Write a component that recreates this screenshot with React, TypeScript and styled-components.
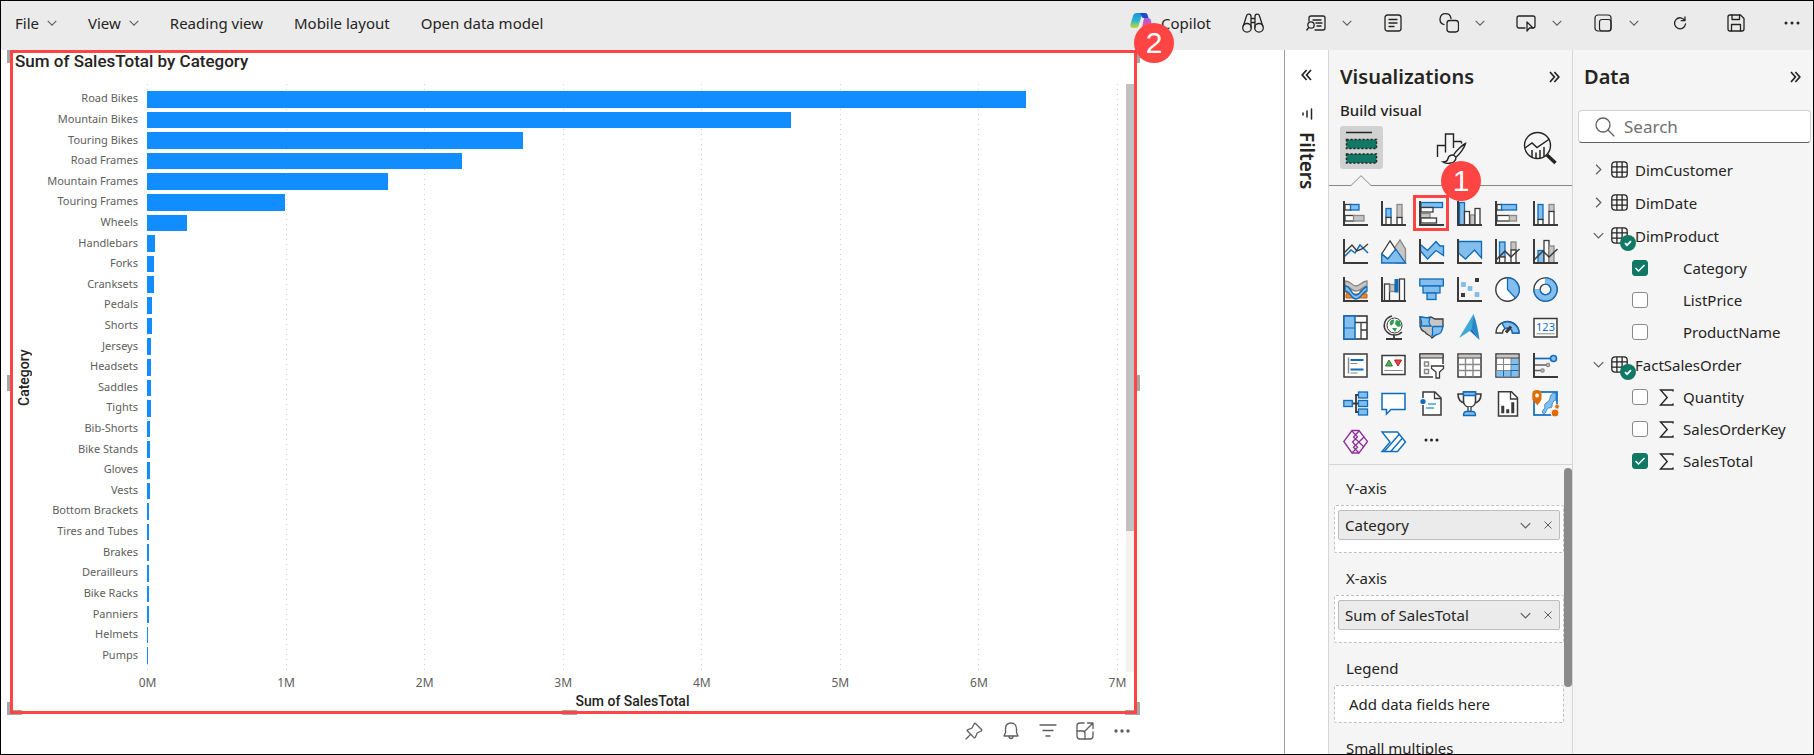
import React from "react";
import styled, { createGlobalStyle } from "styled-components";

const ink = "#252423";
const dark = "#3b3a39";
const blue = "#118dff";
const red = "#ff4444";
const green = "#117865";
const iconBlue = "#83beec";
const iconEdge = "#0f6cbd";
const iconGray = "#c8c6c4";

const GlobalStyle = createGlobalStyle`
  *, *::before, *::after { box-sizing: border-box; }
  body {
    margin: 0;
    font-family: "Noto Sans", "Open Sans", sans-serif;
    font-size: 15px;
    line-height: 20px;
    color: ${ink};
    background: #fff;
  }
  button {
    font: inherit;
    color: inherit;
    background: none;
    border: 0;
    padding: 0;
    cursor: pointer;
  }
  svg { display: block; flex: none; }
  ul { list-style: none; margin: 0; padding: 0; }
  h1, h2, h3 { margin: 0; }
`;

const Shell = styled.div`
  display: flex;
  flex-direction: column;
  height: 100vh;
  border: 1px solid #000;
  overflow: hidden;
`;

/* ---------- top bar ---------- */

const TopBar = styled.header`
  display: flex;
  justify-content: space-between;
  align-items: center;
  height: 49px;
  flex: none;
  padding: 0 11px 6px 14px;
  background: #ebebeb;
`;

const MenuGroup = styled.nav`
  display: flex;
  align-items: center;
  gap: 31px;
`;

const MenuButton = styled.button`
  display: flex;
  align-items: center;
  gap: 8px;
  white-space: nowrap;
  font-size: 15px;
`;

const ActionGroup = styled.div`
  display: flex;
  align-items: center;
  gap: 31px;
`;

const ActionButton = styled.button<{ $after?: number }>`
  display: flex;
  align-items: center;
  gap: 16px;
  padding-right: ${(p) => p.$after ?? 0}px;
`;

const CopilotButton = styled.button`
  display: flex;
  align-items: center;
  gap: 8px;
`;

/* ---------- layout ---------- */

const Workspace = styled.div`
  display: flex;
  flex: 1;
  min-height: 0;
`;

const Canvas = styled.main`
  display: flex;
  flex-direction: column;
  flex: 1;
  min-width: 0;
  padding: 0 147px 0 9px;
`;

/* ---------- bar chart visual ---------- */

const Visual = styled.section`
  position: relative;
  display: flex;
  flex-direction: column;
  flex: 1;
  min-height: 0;
  border: 3px solid ${red};
  font-family: Roboto, "Noto Sans", sans-serif;
`;

const Handle = styled.span<{ $v: "top" | "mid" | "bottom"; $h: "left" | "center" | "right" }>`
  position: absolute;
  z-index: -1;
  border: 0 solid #a6a6a6;
  width: ${(p) => (p.$h === "center" || p.$v === "bottom" ? 15 : 5)}px;
  height: ${(p) => (p.$h === "center" ? 5 : p.$v === "mid" ? 16 : 13)}px;
  ${(p) =>
    p.$h === "left"
      ? "left: -6px; border-left-width: 5px;"
      : p.$h === "right"
        ? "right: -6px; border-right-width: 5px;"
        : "left: 49%;"}
  ${(p) =>
    p.$v === "top"
      ? "top: -3px;"
      : p.$v === "bottom"
        ? "bottom: -4px; border-bottom-width: 5px;"
        : "top: 49%;"}
`;

const Callout = styled.span<{ $top: number; $right: number }>`
  position: absolute;
  top: ${(p) => p.$top}px;
  right: ${(p) => p.$right}px;
  z-index: 3;
  display: flex;
  align-items: center;
  justify-content: center;
  width: 40px;
  height: 40px;
  border-radius: 50%;
  background: ${red};
  color: #fff;
  font-family: "Liberation Sans", sans-serif;
  font-size: 30px;
`;

const VisualTitle = styled.h1`
  height: 31px;
  flex: none;
  padding-left: 2px;
  font-size: 17px;
  font-weight: 500;
  line-height: 16px;
`;

const Plot = styled.div`
  display: flex;
  flex: 1;
  min-height: 0;
`;

const YTitle = styled.div`
  display: flex;
  align-items: center;
  justify-content: center;
  width: 22px;
  writing-mode: vertical-rl;
  transform: rotate(180deg);
  font-size: 14px;
  font-weight: 500;
`;

const Labels = styled.ul`
  display: flex;
  flex-direction: column;
  width: 103px;
  padding: 4px 0 7px;
  text-align: right;
  font-family: "Noto Sans", sans-serif;
  font-size: 11px;
  color: #605e5c;
`;

const Label = styled.li`
  display: flex;
  flex: 1;
  align-items: center;
  justify-content: flex-end;
  white-space: nowrap;
  min-height: 0;
`;

const PlotArea = styled.div`
  display: grid;
  flex: 1;
  margin: 0 8px 0 9px;
  min-width: 0;

  > * { grid-area: 1 / 1; }
`;

const Grid = styled.div`
  display: flex;
  justify-content: space-between;
`;

const GridLine = styled.span`
  width: 1px;
  background: repeating-linear-gradient(#d2d0ce 0 1px, transparent 1px 5px);
`;

const Bars = styled.ul`
  display: flex;
  flex-direction: column;
  && { padding: 5px 0 6px; }
`;

const BarRow = styled.li`
  display: flex;
  flex: 1;
  min-height: 0;
  padding: 2px 0;
`;

const Bar = styled.span`
  background: ${blue};
`;

const ScrollTrack = styled.div`
  width: 8px;
  background: #f3f2f1;
`;

const ScrollThumb = styled.div`
  height: 76%;
  background: #c1c1c1;
`;

const Ticks = styled.div`
  display: flex;
  justify-content: space-between;
  height: 22px;
  flex: none;
  margin: 0 16px 0 134px;
  font-family: "Noto Sans", sans-serif;
  font-size: 12px;
  line-height: 22px;
  color: #605e5c;
`;

const Tick = styled.span`
  display: flex;
  justify-content: center;
  width: 1px;
`;

const XTitle = styled.div`
  height: 17px;
  flex: none;
  margin: 0 16px 0 134px;
  text-align: center;
  font-size: 14px;
  font-weight: 500;
  line-height: 14px;
`;

const VisualActions = styled.div`
  display: flex;
  justify-content: flex-end;
  align-items: center;
  gap: 17px;
  height: 40px;
  flex: none;
  padding: 0 5px 6px 0;
  color: #605e5c;
`;

/* ---------- filters strip ---------- */

const FiltersStrip = styled.aside`
  display: flex;
  flex-direction: column;
  align-items: center;
  gap: 27px;
  width: 44px;
  flex: none;
  padding: 19px 0 0;
  border-left: 1px solid #a19f9d;
`;

const FiltersTab = styled.button`
  display: flex;
  align-items: center;
  gap: 12px;
  writing-mode: vertical-rl;
  font-size: 19px;
  font-weight: 600;
`;

/* ---------- panes ---------- */

const Pane = styled.aside<{ $width: number }>`
  position: relative;
  display: flex;
  flex-direction: column;
  width: ${(p) => p.$width}px;
  flex: none;
  background: #f5f5f5;
  border-left: 1px solid #d6d6d6;
`;

const PaneHeader = styled.div`
  display: flex;
  align-items: center;
  justify-content: space-between;
  height: 52px;
  flex: none;
  padding: 1px 12px 0 11px;
`;

const PaneTitle = styled.h2`
  font-size: 20px;
  font-weight: 600;
  line-height: 28px;
`;

const SubTitle = styled.h3`
  height: 24px;
  flex: none;
  padding-left: 11px;
  font-size: 15px;
  font-weight: 500;
  line-height: 16px;
`;

const Modes = styled.div`
  display: flex;
  justify-content: space-between;
  height: 60px;
  flex: none;
  padding: 0 11px;
`;

const ModeButton = styled.button<{ $active?: boolean }>`
  display: flex;
  align-items: center;
  justify-content: center;
  width: 43px;
  height: 43px;
  border-radius: 3px;
  background: ${(p) => (p.$active ? "#d1d1d1" : "transparent")};
`;

const Notch = styled.div`
  display: flex;
  height: 11px;
  flex: none;
  margin-top: -11px;
  color: #8a8886;

  &::before { content: ""; width: 22px; border-bottom: 1px solid; }
  &::after { content: ""; flex: 1; border-bottom: 1px solid; }
`;

const Gallery = styled.div`
  display: grid;
  grid-template-columns: repeat(6, 38px);
  grid-auto-rows: 38px;
  flex: none;
  padding: 8px 0 4px 7px;
  border-bottom: 1px solid #d6d6d6;
`;

const GalleryButton = styled.button<{ $marked?: boolean }>`
  display: flex;
  align-items: center;
  justify-content: center;
  margin: 1px;
  border: 3px solid ${(p) => (p.$marked ? red : "transparent")};
`;

const Wells = styled.div`
  display: flex;
  flex: 1;
  min-height: 0;
  overflow: hidden;
`;

const WellList = styled.div`
  flex: 1;
  padding: 0 0 0 5px;
`;

const WellTitle = styled.h3`
  height: 40px;
  padding: 13px 0 0 12px;
  font-size: 15px;
  font-weight: 400;
  line-height: 20px;
`;

const Well = styled.div<{ $empty?: boolean }>`
  height: ${(p) => (p.$empty ? 38 : 48)}px;
  margin-bottom: 2px;
  padding: ${(p) => (p.$empty ? "8px 14px" : "4px 3px")};
  border: 1px dashed #c0c0c0;
  border-radius: 2px;
  background: #fff;
`;

const Pill = styled.div`
  display: flex;
  align-items: center;
  gap: 13px;
  height: 30px;
  padding: 0 7px 0 6px;
  border: 1px solid #bdbdbd;
  border-radius: 2px;
  background: #ebebeb;
`;

const PillText = styled.span`
  flex: 1;
`;

const WellScroll = styled.div`
  width: 8px;
  height: 219px;
  margin-top: 3px;
  border-radius: 4px;
  background: #8a8a8a;
`;

/* ---------- data pane ---------- */

const SearchBox = styled.label`
  display: flex;
  align-items: center;
  gap: 7px;
  height: 33px;
  flex: none;
  margin: 8px 2px 10px 5px;
  padding-left: 16px;
  border: 1px solid #d1d1d1;
  border-bottom-color: #616161;
  border-radius: 4px;
  background: #fff;
  color: #616161;
`;

const SearchInput = styled.input`
  flex: 1;
  min-width: 0;
  border: 0;
  outline: 0;
  background: none;
  font: inherit;
  font-size: 17px;

  &::placeholder { color: #707070; opacity: 1; }
`;

const TableRow = styled.button`
  display: flex;
  align-items: center;
  gap: 7px;
  width: 100%;
  height: 33px;
  padding-left: 20px;
`;

const TableIconBox = styled.span`
  position: relative;
`;

const TableBadge = styled.span`
  position: absolute;
  left: 9px;
  top: 8px;
`;

const FieldRow = styled.label`
  display: flex;
  align-items: center;
  height: 32px;
  padding-left: 59px;
`;

const SigmaSlot = styled.span`
  width: 35px;
  padding-left: 11px;
`;

const Check = styled.input`
  appearance: none;
  width: 16px;
  height: 16px;
  margin: 0;
  border: 1px solid #8a8886;
  border-radius: 3px;
  background: #fff;

  &:checked {
    border-color: ${green};
    background: ${green};
  }
`;

const CheckBoxWrap = styled.span`
  display: grid;

  > * { grid-area: 1 / 1; }
  > svg { pointer-events: none; }
`;

/* ---------- small icons ---------- */

const Chevron = ({ dir = "down", size = 10 }: { dir?: "down" | "right"; size?: number }) => (
  <svg width={size} height={size} viewBox="0 0 10 10" fill="none" stroke="#605e5c" strokeWidth="1.1">
    <path d={dir === "down" ? "M.7 2.8 5 7.1l4.3-4.3" : "M2.8.7 7.1 5 2.8 9.3"} />
  </svg>
);

const DoubleChevron = ({ left }: { left?: boolean }) => (
  <svg width="11" height="12" viewBox="0 0 11 12" fill="none" stroke={ink} strokeWidth="1.7">
    <path d={left ? "M5.6 1 1.2 6l4.4 5M10 1 5.6 6l4.4 5" : "M1 1l4.4 5L1 11M5.4 1l4.4 5-4.4 5"} />
  </svg>
);

const Line = ({ w = 20, h = 20, sw = 1.3, children }: { w?: number; h?: number; sw?: number; children: React.ReactNode }) => (
  <svg width={w} height={h} viewBox={`0 0 ${w} ${h}`} fill="none" stroke="currentColor" strokeWidth={sw} strokeLinejoin="round" strokeLinecap="round">
    {children}
  </svg>
);

const CopilotIcon = () => (
  <svg width="23" height="22" viewBox="0 0 23 22">
    <defs>
      <linearGradient id="cpA" x1="0" y1="0" x2="0" y2="1">
        <stop offset="0" stopColor="#1b8fe8" />
        <stop offset=".5" stopColor="#2bb5c9" />
        <stop offset="1" stopColor="#c9d83a" />
      </linearGradient>
      <linearGradient id="cpB" x1="0" y1="0" x2="0" y2="1">
        <stop offset="0" stopColor="#a45be8" />
        <stop offset=".5" stopColor="#e2559b" />
        <stop offset="1" stopColor="#ff8a4c" />
      </linearGradient>
    </defs>
    <path d="M14 6h4c1.600 0 2.500 1 3 2.500.8 2.500.4 4-.2 6L19.500 18c-.7 2-1.700 3-4 3H8c2 0 3-1 3.500-3z" fill="url(#cpB)" />
    <path d="M7 1h8c-2 0-3 1-3.500 3L8.500 14c-.5 1.500-1.500 2-3 2H3c-2.500 0-3-2-2.300-4.500L3 4c.6-2 1.800-3 4-3z" fill="url(#cpA)" />
    <path d="M10 1h5c1.600 0 2.300.8 2.700 2.200L18.500 6H14c-1.500 0-2.500-1-2.500-2z" fill="#1c4bc9" />
  </svg>
);

const Dots = ({ size = 20, r = 1.5, gap = 6 }: { size?: number; r?: number; gap?: number }) => (
  <svg width={size} height={size} viewBox={`0 0 ${size} ${size}`} fill="currentColor">
    {[-1, 0, 1].map((n) => (
      <circle key={n} cx={size / 2 + n * gap} cy={size / 2} r={r} />
    ))}
  </svg>
);

const Sigma = () => (
  <svg width="15" height="17" viewBox="0 0 15 17" fill="none" stroke={ink} strokeWidth="1.4">
    <path d="M14 2.500V1H1.500l6.700 7.500L1.500 16H14v-1.500" />
  </svg>
);

const TableIcon = () => (
  <svg width="17" height="17" viewBox="0 0 17 17" fill="none" stroke={ink} strokeWidth="1.3">
    <rect x=".8" y=".8" width="15.400" height="15.400" rx="3.200" />
    <path d="M5.900 1v15M11.100 1v15M1 5.900h15M1 11.100h15" />
  </svg>
);

const BadgeIcon = () => (
  <svg width="16" height="16" viewBox="0 0 16 16" fill="none">
    <circle cx="8" cy="8" r="8" fill={green} />
    <path d="m5 8.200 2 2 4-4" stroke="#fff" strokeWidth="1.700" />
  </svg>
);

/* ---------- gallery icons, drawn on a 25px square ---------- */

const Axes = () => <path d="M1 0v24h24" stroke={dark} strokeWidth="2" fill="none" />;
const B = { fill: iconBlue, stroke: iconEdge, strokeWidth: 1.3 };
const G = { fill: iconGray, stroke: "#8a8886", strokeWidth: 1.3 };
const W = { fill: "#fff", stroke: dark, strokeWidth: 1.3 };

const galleryIcons: { name: string; art: React.ReactNode }[] = [
  { name: "Stacked bar chart", art: <><rect x="2" y="3.500" width="6" height="5.500" {...W} /><rect x="7.500" y="3.500" width="8.500" height="5.500" {...B} /><rect x="2" y="14.500" width="9" height="5.500" {...W} /><rect x="10.500" y="14.500" width="10.500" height="5.500" {...G} /><Axes /></> },
  { name: "Stacked column chart", art: <><rect x="5" y="7.500" width="5" height="9" {...B} /><rect x="5" y="16.500" width="5" height="7.500" {...W} /><rect x="16" y="3.500" width="5" height="13" {...G} /><rect x="16" y="16.500" width="5" height="7.500" {...W} /><Axes /></> },
  { name: "Clustered bar chart", art: <><rect x="2" y="1.500" width="21.500" height="5" {...B} /><rect x="2" y="6.500" width="12" height="4.500" {...W} /><rect x="2" y="12.500" width="9" height="4.500" {...G} /><rect x="2" y="17" width="15.500" height="5" {...W} /><Axes /></> },
  { name: "Clustered column chart", art: <><rect x="2.500" y="1.500" width="5" height="22.500" {...B} /><rect x="7.500" y="10.500" width="5" height="13.500" {...W} /><rect x="13.500" y="14" width="4.500" height="10" {...G} /><rect x="18" y="7.500" width="5" height="16.500" {...W} /><Axes /></> },
  { name: "100% stacked bar chart", art: <><rect x="2" y="3.500" width="5" height="5.500" {...W} /><rect x="6.500" y="3.500" width="15" height="5.500" {...B} /><rect x="2" y="14.500" width="12.500" height="5.500" {...W} /><rect x="14.500" y="14.500" width="7" height="5.500" {...G} /><Axes /></> },
  { name: "100% stacked column chart", art: <><rect x="5" y="3.500" width="5" height="15" {...B} /><rect x="5" y="18.500" width="5" height="5.500" {...W} /><rect x="16" y="3.500" width="5" height="7" {...G} /><rect x="16" y="10.500" width="5" height="13.500" {...W} /><Axes /></> },
  { name: "Line chart", art: <><path d="m1 18 7-7 4 3 5-8 8 8" stroke={iconEdge} strokeWidth="1.500" /><path d="m1 14 8-8 5 6 5-2 6-5" stroke={dark} strokeWidth="1.400" /><Axes /></> },
  { name: "Area chart", art: <><path d="m10 14 9-13 5.500 9v14H15z" {...G} /><path d="M.7 15 9 2l6 9-8 9z" {...W} /><path d="M.7 24V15l6 5 8-10 9.800 14z" {...B} /></> },
  { name: "Stacked area chart", art: <><path d="m1.500 5.500 7 6 8.500-9 4 4.500h3.500v9.500L17 11.500 8.500 20l-7-8z" {...B} /><Axes /></> },
  { name: "100% stacked area chart", art: <><path d="M1.500 2.500h23V19l-7-8-9 9-7-6z" {...B} /><Axes /></> },
  { name: "Line and stacked column chart", art: <><rect x="4.500" y="3" width="5.500" height="15" {...B} /><rect x="4.500" y="18" width="5.500" height="6" {...W} /><rect x="16" y="3" width="5" height="8" {...G} /><rect x="16" y="11" width="5" height="13" {...W} /><path d="m1 21 9-9 6 6 8.500-8" stroke={dark} strokeWidth="1.500" /><Axes /></> },
  { name: "Line and clustered column chart", art: <><rect x="5" y="11.500" width="6" height="12.500" {...B} /><rect x="11" y="1.500" width="5" height="22.500" {...W} /><rect x="16" y="7" width="5" height="17" {...G} /><path d="m1 21 9-9 6 6 8.500-8" stroke={dark} strokeWidth="1.500" /><Axes /></> },
  { name: "Ribbon chart", art: <><path d="M3 12h5v4H3zM3 17h21v4H3zM17 12h6v4h-6z" fill="#f08a24" stroke="#c55a11" /><path d="M2 4c6 0 7 5 11 5s6-5 11-5v5c-4 0-6 5-11 5S8 9 2 9z" {...G} /><path d="M2 9c6 0 6 9 11 9s6-8 11-8v4c-4 0-6 8-11 8S7 14 2 14z" {...B} /><Axes /></> },
  { name: "Waterfall chart", art: <><rect x="3.500" y="7" width="5" height="17" {...W} /><rect x="9" y="7.500" width="5" height="7" {...G} /><rect x="14" y="2.500" width="3" height="12.500" fill={iconEdge} stroke={iconEdge} /><rect x="18.500" y="2" width="5" height="22" {...W} /><Axes /></> },
  { name: "Funnel chart", art: <><rect x=".8" y="2" width="23.500" height="7" {...B} /><rect x="4" y="9" width="17" height="7" {...B} /><rect x="8" y="16" width="9" height="6.500" {...B} /></> },
  { name: "Scatter chart", art: <><path d="M18 1h4v4h-4zM4 16h4v4H4z" fill={dark} /><path d="M4.500 5.500h4v4h-4zM11 9.500h4v4h-4zM18 15.500h4v4h-4z" fill={iconBlue} stroke="#6aaee0" strokeWidth=".6" /><Axes /></> },
  { name: "Pie chart", art: <><circle cx="12.500" cy="12.500" r="11.700" {...W} strokeWidth="1.400" /><path d="M12.500.8a11.700 11.700 0 0 1 8 20.200l-8-8.500z" {...B} /></> },
  { name: "Donut chart", art: <><circle cx="12.500" cy="12.500" r="8.500" fill="none" stroke={dark} strokeWidth="7.500" /><circle cx="12.500" cy="12.500" r="8.500" fill="none" stroke="#fff" strokeWidth="4.800" /><path d="M12.500 4a8.500 8.500 0 1 1-8.500 8.500" fill="none" stroke={iconEdge} strokeWidth="7.500" /><path d="M12.500 4a8.500 8.500 0 1 1-8.500 8.500" fill="none" stroke={iconBlue} strokeWidth="4.800" /></> },
  { name: "Treemap", art: <><rect x="1" y="1" width="23" height="23" {...W} strokeWidth="1.600" /><rect x="1" y="1" width="11" height="23" {...B} strokeWidth="1.500" /><path d="M1 13h11" stroke={iconEdge} /><path d="M12 7.500h12M18 7.500V24M18 15h6" stroke={dark} strokeWidth="1.300" /></> },
  { name: "Map", art: <><circle cx="13.500" cy="10.500" r="7.500" fill="#fff" stroke={dark} /><path d="M9 7c2-3 4-3 4-1s-1 3-2 4-3 0-2-3zM15 5l4 1 1 5-3 1-3-3zM11 13l5 0-2 4z" fill="#2e9e4f" /><path d="M11 1C3 3 1 12 6 17c4 4 11 4 15 0" stroke={dark} strokeWidth="1.500" /><path d="M13 20v3.500M5 24h16" stroke={dark} strokeWidth="1.800" /></> },
  { name: "Filled map", art: <><path d="M1 2l6 1 5-1 4 2h8v7c-2 3-2 7-5 8-3 0-4 3-6 4-1-3-6-3-7-6-3-1-5-4-5-8z" {...G} stroke={dark} /><path d="M1 2l10 1c-1 3-2 5 1 8H1.500C4 8 2 5 1 2z" {...B} /><path d="M24 11.500c-1 4-2 8-6 8-2 0-3 3-5 1 2-3-1-6 1-9z" {...B} /></> },
  { name: "Azure map", art: <><path d="M16.500-1 2 23l14-9z" fill="#3fa9d6" /><path d="M16.500-1 15 14l7.500 11c-1-8-3-18-6-26z" fill="#2788c4" /><path d="m13 16 2-2 7.500 11z" fill="#1769c9" /></> },
  { name: "Gauge", art: <><path d="M1 18a11.500 11.500 0 0 1 23 0h-6.500a5 5 0 0 0-10 0z" {...W} strokeWidth="1.400" /><path d="M7 8.300A11.500 11.500 0 0 1 24 18h-6.500A5 5 0 0 0 10 13.600z" {...B} strokeWidth="1.400" /><path d="m11 17.500 5-6" stroke={dark} strokeWidth="3" /></> },
  { name: "Card", art: <><rect x="1" y="3.500" width="23" height="18.500" fill="#fff" stroke={dark} strokeWidth="1.500" /><text x="12.500" y="15.800" textAnchor="middle" fontSize="11" fontFamily="Noto Sans" fill={iconEdge} stroke="none">123</text><path d="M3.500 18.800h18" stroke="#8a8886" /></> },
  { name: "Multi-row card", art: <><rect x="1" y="1" width="23" height="23" fill="#fff" stroke={dark} strokeWidth="1.500" /><path d="M5.500 4.500v16" stroke="#8a8886" strokeWidth="1.500" /><path d="M7.500 7h13M7.500 16.500h13" stroke={iconEdge} strokeWidth="2.200" /><path d="M7.500 10.500h7M7.500 20h7" stroke="#8a8886" strokeWidth="1.200" /></> },
  { name: "KPI", art: <><rect x="1" y="2.500" width="23" height="19" fill="#fff" stroke={dark} strokeWidth="1.500" /><path d="m4.500 13 3.500-6 3.500 6z" fill="#4caf50" stroke="#2e7d32" /><path d="m13.500 7 3.500 6 3.500-6z" fill="#ef4444" stroke="#b91c1c" /><path d="M3.500 17.500h18" stroke="#8a8886" /></> },
  { name: "Slicer", art: <><path d="M14 24H1V1h23v10" fill="#fff" stroke={dark} strokeWidth="1.500" /><path d="M1 1h23v4H1z" fill={iconGray} stroke={dark} /><path d="M5.500 9h4v4h-4zM5.500 16.500h4v4h-4z" fill="#fff" stroke="#8a8886" strokeWidth="1.500" /><path d="M12.500 13h12v2.500L20.500 19v6h-3.500v-6l-4.500-3.500z" {...W} strokeWidth="1.300" /></> },
  { name: "Table", art: <><rect x="1" y="1" width="23" height="23" fill="#fff" stroke={dark} strokeWidth="1.500" /><path d="M1.700 1.700h21.600v3H1.700z" fill={iconGray} /><path d="M1 5h23" stroke={dark} /><path d="M8.500 5v18.500M16 5v18.500M1.500 11.500h22M1.500 17.500h22" stroke="#8a8886" strokeWidth="1.400" /></> },
  { name: "Matrix", art: <><rect x="1" y="1" width="23" height="23" fill="#fff" stroke={dark} strokeWidth="1.500" /><path d="M1.700 1.700h21.600v3H1.700z" fill={iconGray} /><path d="M16 5h7.500v18.500h-22v-6H16z" fill={iconBlue} /><path d="M8.500 5v12.500M16 5v12.500M1.500 11.500H16M1.500 17.500H16" stroke="#8a8886" /><path d="M8.500 17.500v6M16 17.500v6M16 11.500h7.500M16 17.500h7.500" stroke={iconEdge} /><path d="M1 5h23" stroke={dark} /></> },
  { name: "Key influencers", art: <><path d="M1 5.500h17" stroke={iconEdge} strokeWidth="1.700" /><circle cx="20.500" cy="5.500" r="3" {...B} strokeWidth="1.500" /><path d="M1 12h13M1 17.500h7" stroke="#605e5c" strokeWidth="1.300" /><circle cx="15" cy="12" r="1.600" {...G} /><circle cx="9.500" cy="17.500" r="1.600" {...G} /><Axes /></> },
  { name: "Decomposition tree", art: <><path d="M9 12.500h7M16 4h-3v17h3" stroke={dark} strokeWidth="1.800" /><rect x=".8" y="9.500" width="8.500" height="6" {...B} /><rect x="15.500" y="1" width="9" height="6" {...B} /><rect x="15.500" y="9.500" width="9" height="6" {...B} /><rect x="15.500" y="18" width="9" height="6" {...B} /></> },
  { name: "Q&A", art: <path d="M1 2.500h23v16H10L5.500 23v-4.500H1z" fill="#fff" stroke={iconEdge} strokeWidth="1.500" /> },
  { name: "Narrative", art: <><path d="M4 7V1h12l6 6v17H4V14" fill="#fff" stroke={dark} strokeWidth="1.500" /><path d="M15.500 1v6.500H22" stroke={dark} strokeWidth="1.300" /><circle cx="4" cy="10.500" r="2.600" fill={iconEdge} /><path d="M9 13h8M7 17h8" stroke="#4a9fdc" strokeWidth="1.300" /></> },
  { name: "Goals", art: <><path d="M6.500 3H1c0 5 2 8 6.500 9M18.500 3H24c0 5-2 8-6.500 9" stroke={dark} strokeWidth="1.600" /><path d="M6.500 1h12v9c0 4-3 6-6 6s-6-2-6-6z" {...W} strokeWidth="1.500" /><path d="M6.500 1h12v3.500h-12z" {...B} /><path d="M11 16v4.500h3V16" {...W} /><path d="M6.500 24.500c0-3 1.500-4 3-4h6c1.500 0 3 1 3 4z" {...B} /></> },
  { name: "Paginated report", art: <><path d="M3.500.8h13l6 6V25h-19z" fill="#fff" stroke={dark} strokeWidth="1.500" /><path d="M15.500 1v7H22" stroke={dark} strokeWidth="1.300" /><path d="M6.500 15H9v7H6.500zM11.500 18.500H14V22h-2.500zM16.500 11.500H19V22h-2.500z" fill={dark} stroke={dark} strokeWidth=".5" /></> },
  { name: "ArcGIS map", art: <><rect x="1" y="1" width="23" height="23" fill="#fff" stroke={iconEdge} strokeWidth="1.700" /><path d="M23 2v7c-3 1-4 3-4 6s-3 1-5 3c-1 2-1 4-3 5-2 0-2-4 0-5 2-2-1-4 2-6s3-2 4-5c0-3 2-5 6-5z" fill={iconBlue} stroke={iconEdge} strokeWidth=".7" /><path d="M4-1c3 0 4.500 1.500 4.500 4v5c0 2-3 4-4 6.500C3 12-.7 10-.7 8V3C-.7.500 1-1 4-1z" fill="#e06c00" /><circle cx="4" cy="4.500" r="2" fill="#fff" /><circle cx="22" cy="22" r="4" fill="#e06c00" stroke="#f5f5f5" /><circle cx="24" cy="15.500" r="2.200" fill="#e06c00" stroke="#f5f5f5" strokeWidth=".6" /></> },
  { name: "Power Apps", art: <g stroke="#8e2f9c" strokeWidth="1.300"><path d="M9 1.500h7l8.500 11L16 24H9L.8 12.500z" /><path d="m9 2 5.500 5.800L9.500 13l5 5.200L9 24M16 2l-5.500 6L21 18M16 24l-5.500-5.800L21 8" /></g> },
  { name: "Power Automate", art: <g stroke={iconEdge} strokeWidth="1.400"><path d="M1 3h15.500l8 10-8 9.500H1l8-9.500z" fill="#fff" /><path d="M3.500 22.300 18.500 5M10 22.300 21.500 9" /></g> },
  { name: "More visuals", art: <g fill={ink}><circle cx="7" cy="11" r="1.500" /><circle cx="12.500" cy="11" r="1.500" /><circle cx="18" cy="11" r="1.500" /></g> },
];

/* ---------- data ---------- */

const sales: [string, number][] = [
  ["Road Bikes", 6.34], ["Mountain Bikes", 4.645], ["Touring Bikes", 2.71], ["Road Frames", 2.273],
  ["Mountain Frames", 1.74], ["Touring Frames", 0.997], ["Wheels", 0.287], ["Handlebars", 0.061],
  ["Forks", 0.052], ["Cranksets", 0.05], ["Pedals", 0.037], ["Shorts", 0.033], ["Jerseys", 0.031],
  ["Headsets", 0.03], ["Saddles", 0.028], ["Tights", 0.027], ["Bib-Shorts", 0.025], ["Bike Stands", 0.023],
  ["Gloves", 0.02], ["Vests", 0.02], ["Bottom Brackets", 0.018], ["Tires and Tubes", 0.017],
  ["Brakes", 0.016], ["Derailleurs", 0.015], ["Bike Racks", 0.014], ["Panniers", 0.012],
  ["Helmets", 0.006], ["Pumps", 0.005],
];
const axisMax = 7;
const ticks = [0, 1, 2, 3, 4, 5, 6, 7];

type Field = { name: string; checked?: boolean; sum?: boolean };
const tables: { name: string; fields?: Field[] }[] = [
  { name: "DimCustomer" },
  { name: "DimDate" },
  { name: "DimProduct", fields: [{ name: "Category", checked: true }, { name: "ListPrice" }, { name: "ProductName" }] },
  { name: "FactSalesOrder", fields: [{ name: "Quantity", sum: true }, { name: "SalesOrderKey", sum: true }, { name: "SalesTotal", sum: true, checked: true }] },
];

const wells: { title: string; value?: string }[] = [
  { title: "Y-axis", value: "Category" },
  { title: "X-axis", value: "Sum of SalesTotal" },
  { title: "Legend" },
];

/* ---------- sections ---------- */

const Header = () => (
  <TopBar>
    <MenuGroup>
      <MenuButton>File <Chevron /></MenuButton>
      <MenuButton>View <Chevron /></MenuButton>
      <MenuButton>Reading view</MenuButton>
      <MenuButton>Mobile layout</MenuButton>
      <MenuButton>Open data model</MenuButton>
    </MenuGroup>
    <ActionGroup>
      <CopilotButton><CopilotIcon />Copilot</CopilotButton>
      <ActionButton $after={11} aria-label="Find">
        <Line w={22}><path d="M9 3.500v11M13 3.500v11M9 5.500h4M9 9.500h4M9 3.500C9 .5 5 .5 4.500 3L1.300 13M13 3.500c0-3 4-3 4.500-.5l3.200 10" /><circle cx="5" cy="14.800" r="4.300" /><circle cx="17" cy="14.800" r="4.300" /></Line>
      </ActionButton>
      <ActionButton aria-label="Explore">
        <Line><path d="M3 8V5c0-1.200.8-2 2-2h12c1.200 0 2 .8 2 2v10c0 1.200-.8 2-2 2H9" /><path d="M7 7h8M10 10h6M11 13h4" /><circle cx="5" cy="12" r="3.200" /><path d="m2.800 14.500-2 2.500" /></Line>
        <Chevron />
      </ActionButton>
      <ActionButton $after={5} aria-label="Text box">
        <Line><rect x="2" y="2" width="16" height="16" rx="2.500" /><path d="M6 6.500h8M6 10h8M6 13.500h5" /></Line>
      </ActionButton>
      <ActionButton aria-label="Shapes">
        <Line><path d="M5 11.500A5.500 5.500 0 1 1 12 5.500" /><rect x="8" y="7.500" width="11.500" height="11.500" rx="2.800" /></Line>
        <Chevron />
      </ActionButton>
      <ActionButton aria-label="Buttons">
        <Line><path d="M9 15H3c-1.200 0-2-.8-2-2V5c0-1.200.8-2 2-2h14c1.200 0 2 .8 2 2v8c0 1.200-.8 2-2 2" /><path d="m11 9 6 6h-3.500L11 18z" /></Line>
        <Chevron />
      </ActionButton>
      <ActionButton aria-label="Visual interactions">
        <Line sw={1.2}><rect x="2" y="2" width="16" height="16" rx="3" /><rect x="6.500" y="6.500" width="11.500" height="11.500" rx="2.500" /></Line>
        <Chevron />
      </ActionButton>
      <ActionButton $after={5} aria-label="Refresh">
        <Line><path d="M14.800 7.500A5.500 5.500 0 1 0 15.500 11M15 4v3.700h-3.700" /></Line>
      </ActionButton>
      <ActionButton $after={5} aria-label="Save">
        <Line><path d="M4 2h10.500L18 5.500V16c0 1.200-.8 2-2 2H4c-1.200 0-2-.8-2-2V4c0-1.200.8-2 2-2z" /><path d="M6 2v4.500h7.500V2M5.500 18v-6.500h9V18" /></Line>
      </ActionButton>
      <ActionButton aria-label="More options"><Dots /></ActionButton>
    </ActionGroup>
  </TopBar>
);

const BarChart = () => (
  <Canvas>
    <Visual>
      <Handle $v="top" $h="left" />
      <Handle $v="mid" $h="left" />
      <Handle $v="bottom" $h="left" />
      <Handle $v="bottom" $h="center" />
      <Handle $v="top" $h="right" />
      <Handle $v="mid" $h="right" />
      <Handle $v="bottom" $h="right" />
      <Callout $top={-30} $right={-40}>2</Callout>
      <VisualTitle>Sum of SalesTotal by Category</VisualTitle>
      <Plot>
        <YTitle>Category</YTitle>
        <Labels>{sales.map(([name]) => <Label key={name}>{name}</Label>)}</Labels>
        <PlotArea>
          <Grid>{ticks.map((t) => <GridLine key={t} />)}</Grid>
          <Bars>
            {sales.map(([name, value]) => (
              <BarRow key={name}><Bar style={{ width: `${(value / axisMax) * 100}%` }} /></BarRow>
            ))}
          </Bars>
        </PlotArea>
        <ScrollTrack><ScrollThumb /></ScrollTrack>
      </Plot>
      <Ticks>{ticks.map((t) => <Tick key={t}>{t}M</Tick>)}</Ticks>
      <XTitle>Sum of SalesTotal</XTitle>
    </Visual>
    <VisualActions>
      <ActionButton aria-label="Pin visual">
        <Line><path d="m11.500 2.500 6 6c.6.600.3 1.200-.3 1.500l-4 2-2 4.500c-.3.500-.7.600-1.200.1L3.500 10c-.5-.5-.4-1 .1-1.200L8 7l2.300-4.300c.3-.5.800-.6 1.200-.2z" /><path d="m6.500 13.500-4.500 4.500" /></Line>
      </ActionButton>
      <ActionButton aria-label="Set alert">
        <Line><path d="M10 2C6.500 2 4.500 4.500 4.500 8v3.500L3 15h14l-1.500-3.500V8c0-3.500-2-6-5.500-6z" /><path d="M8 15.500c0 1.200.8 2 2 2s2-.8 2-2" /></Line>
      </ActionButton>
      <ActionButton aria-label="Filters on this visual"><Line><path d="M2 4h16M5 9.500h10M8 15h4" /></Line></ActionButton>
      <ActionButton aria-label="Focus mode">
        <Line><path d="M9 2H5C3.300 2 2 3.300 2 5v10c0 1.700 1.300 3 3 3h10c1.700 0 3-1.300 3-3v-4" /><path d="M12.500 2H18v5.500M18 2l-8 8M2 10h5.500c1.500 0 2.500 1 2.500 2.500V18" /></Line>
      </ActionButton>
      <ActionButton aria-label="More options"><Dots r={1.7} /></ActionButton>
    </VisualActions>
  </Canvas>
);

const Filters = () => (
  <FiltersStrip>
    <button aria-label="Expand filters"><DoubleChevron left /></button>
    <FiltersTab>
      <Line w={12} h={12} sw={1.5}><path d="M10.500 1v10M6 3v6M2 5v2" /></Line>
      Filters
    </FiltersTab>
  </FiltersStrip>
);

const Visualizations = () => (
  <Pane $width={244}>
    <Callout $top={111} $right={91}>1</Callout>
    <PaneHeader>
      <PaneTitle>Visualizations</PaneTitle>
      <button aria-label="Collapse visualizations"><DoubleChevron /></button>
    </PaneHeader>
    <SubTitle>Build visual</SubTitle>
    <Modes>
      <ModeButton $active aria-label="Build visual">
        <svg width="33" height="33" viewBox="0 0 33 33" fill="none">
          <path d="M1 1.500h26" stroke={ink} strokeWidth="1.500" />
          <path d="M1.500 8.500h30v9h-30zM1.500 23h30v9h-30z" fill={green} stroke={ink} strokeWidth="1.500" strokeDasharray="2.200 1.800" />
        </svg>
      </ModeButton>
      <ModeButton aria-label="Format visual">
        <svg width="32" height="32" viewBox="0 0 32 32" fill="none" stroke={ink} strokeWidth="1.400">
          <path d="M2.500 25V13.500h8v7M10.500 13.500V2h8v14M18.500 9.500h8M26.500 9.500v2" />
          <path d="M30.500 11.500c-3 1.500-9 6.500-12 11.500l2.500 2.200c4-3.200 8.500-9.700 9.500-13.700zM18 23c-3 0-4.500 1-5 3.500S11 30 8 30c3 2 10 2 12-1.500 1-1.500 1-2.300.8-3.300" />
        </svg>
      </ModeButton>
      <ModeButton aria-label="Analytics">
        <svg width="34" height="34" viewBox="0 0 34 34" fill="none" stroke={ink} strokeWidth="1.400">
          <circle cx="14.500" cy="14.500" r="13" />
          <path d="m2 17 7-5 5 4.500L26.500 8M9 26v-7M13 27.500v-6M17 27.500V19M21 25.500V16" strokeWidth="1.500" />
          <path d="m24 24 8.500 8" strokeWidth="3.500" />
        </svg>
      </ModeButton>
    </Modes>
    <Notch>
      <svg width="20" height="11" viewBox="0 0 20 11" fill="none" stroke="currentColor"><path d="M0 10.500 10 .7l10 9.800" /></svg>
    </Notch>
    <Gallery>
      {galleryIcons.map((icon) => (
        <GalleryButton key={icon.name} aria-label={icon.name} $marked={icon.name === "Clustered bar chart"}>
          <svg width="25" height="25" viewBox="0 0 25 25" fill="none" overflow="visible">{icon.art}</svg>
        </GalleryButton>
      ))}
    </Gallery>
    <Wells>
      <WellList>
        {wells.map((well) => (
          <React.Fragment key={well.title}>
            <WellTitle>{well.title}</WellTitle>
            <Well $empty={!well.value}>
              {well.value ? (
                <Pill>
                  <PillText>{well.value}</PillText>
                  <button aria-label={`${well.value} options`}><Chevron size={11} /></button>
                  <button aria-label={`Remove ${well.value}`}>
                    <svg width="8" height="8" viewBox="0 0 8 8" stroke="#605e5c"><path d="m.5.5 7 7m0-7-7 7" /></svg>
                  </button>
                </Pill>
              ) : "Add data fields here"}
            </Well>
          </React.Fragment>
        ))}
        <WellTitle>Small multiples</WellTitle>
      </WellList>
      <WellScroll />
    </Wells>
  </Pane>
);

const DataPane = () => (
  <Pane $width={241}>
    <PaneHeader>
      <PaneTitle>Data</PaneTitle>
      <button aria-label="Collapse data"><DoubleChevron /></button>
    </PaneHeader>
    <SearchBox>
      <Line><circle cx="8" cy="8" r="7" /><path d="m13 13 6 6" /></Line>
      <SearchInput placeholder="Search" aria-label="Search" />
    </SearchBox>
    <ul>
      {tables.map((table) => (
        <li key={table.name}>
          <TableRow>
            <Chevron dir={table.fields ? "down" : "right"} size={11} />
            <TableIconBox>
              <TableIcon />
              {table.fields && <TableBadge><BadgeIcon /></TableBadge>}
            </TableIconBox>
            {table.name}
          </TableRow>
          {table.fields?.map((field) => (
            <FieldRow key={field.name}>
              <CheckBoxWrap>
                <Check type="checkbox" defaultChecked={field.checked} />
                {field.checked && (
                  <svg width="16" height="16" viewBox="0 0 16 16" fill="none" stroke="#fff" strokeWidth="1.400"><path d="m3.500 8 3 3 6-6" /></svg>
                )}
              </CheckBoxWrap>
              <SigmaSlot>{field.sum && <Sigma />}</SigmaSlot>
              {field.name}
            </FieldRow>
          ))}
        </li>
      ))}
    </ul>
  </Pane>
);

export default function App() {
  return (
    <>
      <GlobalStyle />
      <Shell>
        <Header />
        <Workspace>
          <BarChart />
          <Filters />
          <Visualizations />
          <DataPane />
        </Workspace>
      </Shell>
    </>
  );
}
